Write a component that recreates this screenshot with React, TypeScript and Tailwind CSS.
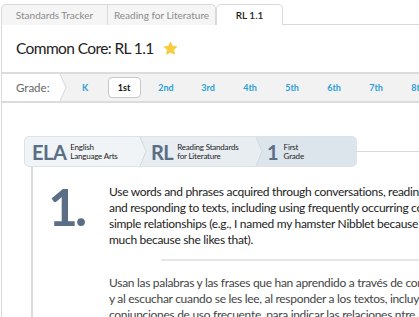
import React from 'react';

const grades = ['K', '1st', '2nd', '3rd', '4th', '5th', '6th', '7th', '8th'];

const Chevron: React.FC<{ fill: string }> = ({ fill }) => (
    <svg width="9" height="30" viewBox="0 0 9 30" preserveAspectRatio="none" className="block shrink-0 h-full">
        <path d="M0 0 L2 0 L8 15 L2 30 L0 30 Z" fill={fill} />
        <path d="M2 0 L8 15 L2 30" fill="none" stroke="#d3d7dc" strokeWidth="1" />
    </svg>
);

const App: React.FC = () => {
    return (
        <div className="w-[419px] h-[317px] overflow-hidden bg-white text-[#333] font-['Lato','Open_Sans',sans-serif]">
            {/* tabs */}
            <div className="flex items-end h-[25px] pt-[4px]">
                <div className="h-[21px] w-[107px] ml-[1px] flex items-center justify-center rounded-tl-[5px] border border-b-0 border-[#d9d9d9] bg-[#f5f5f5] text-[10px] text-[#8a8a8a]">
                    Standards Tracker
                </div>
                <div className="h-[21px] w-[108px] flex items-center justify-center rounded-tr-[5px] border border-b-0 border-l-0 border-[#d9d9d9] bg-[#f5f5f5] text-[10px] text-[#8a8a8a]">
                    Reading for Literature
                </div>
                <div className="h-[21px] w-[67px] flex items-center justify-center rounded-t-[5px] border border-b-0 border-[#d9d9d9] bg-white text-[10px] font-semibold text-[#222]">
                    RL 1.1
                </div>
                <div className="flex-1 h-[21px] border-b border-[#d9d9d9]" />
            </div>

            <div className="ml-[1px] border-l border-[#d9d9d9] h-[292px]">
                {/* title */}
                <div className="h-[47px] flex items-center pl-[14px] gap-[9px]">
                    <span className="text-[15.5px] text-[#222] tracking-[-0.6px]">Common Core: RL 1.1</span>
                    <svg width="15" height="15" viewBox="0 0 24 24">
                        <path
                            d="M12 1.8l3.1 6.5 7.1.9-5.2 4.9 1.3 7.1L12 17.8l-6.3 3.4 1.3-7.1L1.8 9.2l7.1-.9z"
                            fill="#f7cf3b"
                            stroke="#f0bf21"
                            strokeWidth="1"
                            strokeLinejoin="round"
                        />
                    </svg>
                </div>

                {/* grade bar */}
                <div className="h-[31px] flex border-t-2 border-b-2 border-[#dcdcdc] bg-[#f2f2f2]">
                    <div className="flex">
                        <div className="w-[56px] bg-white flex items-center pl-[14px] text-[11.5px] text-[#666]">Grade:</div>
                        <Chevron fill="#ffffff" />
                    </div>
                    <div className="flex items-center">
                        {grades.map((g) =>
                            g === '1st' ? (
                                <div key={g} className="w-[42px] flex items-center justify-center">
                                    <div className="w-[33px] h-[21px] flex items-center justify-center rounded-[4px] border border-[#c8c8c8] bg-white text-[9px] font-bold text-[#111]">
                                        {g}
                                    </div>
                                </div>
                            ) : (
                                <div
                                    key={g}
                                    className={`${g === 'K' ? 'w-[36px]' : 'w-[42px]'} flex items-center justify-center text-[9px] font-bold text-[#2a9fd6]`}
                                >
                                    {g}
                                </div>
                            )
                        )}
                    </div>
                </div>

                {/* breadcrumb */}
                <div className="flex items-center pl-[22px] mt-[33px]">
                    <div className="flex h-[31px] rounded-[5px] border border-[#dde2e8] overflow-hidden bg-[#f1f4f7]">
                        <div className="w-[113px] flex items-center pl-[7px] gap-[4px]">
                            <span className="text-[20px] font-bold tracking-[-0.5px] text-[#5a6e85] leading-none">ELA</span>
                            <span className="text-[8px] leading-[9px] text-[#222] tracking-[-0.2px]">English<br />Language Arts</span>
                        </div>
                        <div className="flex bg-[#e8edf2]">
                            <Chevron fill="#f1f4f7" />
                            <div className="w-[107px] flex items-center pl-[4px] gap-[4px]">
                                <span className="text-[20px] font-bold tracking-[-0.5px] text-[#5a6e85] leading-none">RL</span>
                                <span className="text-[8px] leading-[9px] text-[#222] tracking-[-0.2px]">Reading Standards<br />for Literature</span>
                            </div>
                        </div>
                        <div className="flex bg-[#dde5ec]">
                            <Chevron fill="#e8edf2" />
                            <div className="w-[93px] flex items-center pl-[4px] gap-[5px]">
                                <span className="text-[20px] font-bold text-[#5a6e85] leading-none">1</span>
                                <span className="text-[8px] leading-[9px] text-[#222] tracking-[-0.2px]">First<br />Grade</span>
                            </div>
                        </div>
                    </div>
                    <div className="flex-1 h-px bg-[#d9d9d9]" />
                </div>

                {/* standard */}
                <div className="ml-[29px] border-l-2 border-[#dcdcdc] flex h-[200px]">
                    <div className="w-[76px] shrink-0 flex justify-end pr-[25px] pt-[14px]">
                        <span className="text-[51px] font-bold leading-none tracking-[-3px] text-[#5a6e85]">1.</span>
                    </div>
                    <div className="flex-1 min-w-0 overflow-hidden pt-[17px]">
                        <div className="text-[12px] leading-[16px] tracking-[-0.3px] text-[#222] whitespace-nowrap">
                            <div>Use words and phrases acquired through conversations, reading</div>
                            <div>and responding to texts, including using frequently occurring conjunctions</div>
                            <div>simple relationships (e.g., I named my hamster Nibblet  because</div>
                            <div>much because she likes that).</div>
                        </div>
                        <div className="ml-[52px] mt-[11px] h-[2px] bg-[#e6e6e6]" />
                        <div className="mt-[14px] text-[12px] leading-[16px] tracking-[-0.3px] text-[#444] whitespace-nowrap">
                            <div>Usan las palabras y las frases que han aprendido a través de conversaciones</div>
                            <div>y al escuchar cuando se les lee, al responder a los textos, incluyendo</div>
                            <div>conjunciones de uso frecuente, para indicar las relaciones  ntre</div>
                            <div>he puesto el nombre Mordisco a mi hámster porque le gusta mucho</div>
                        </div>
                    </div>
                </div>
            </div>
        </div>
    );
};

export default App;
